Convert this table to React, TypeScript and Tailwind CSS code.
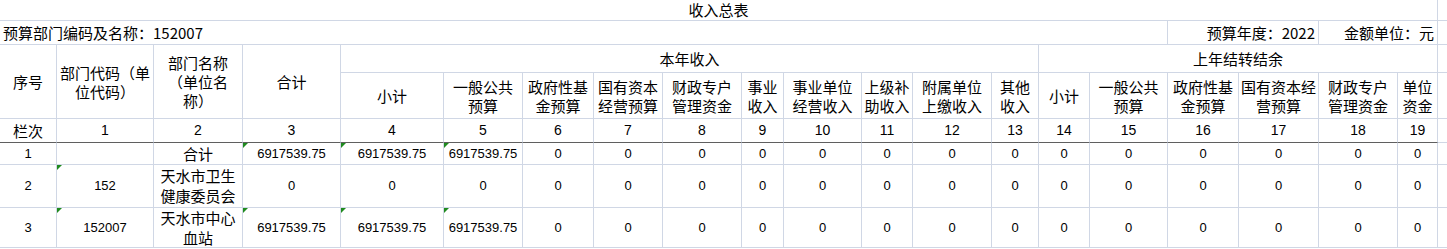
import React from "react";

const CJK = "font-['Noto_Sans_CJK_SC',sans-serif] text-[15px] leading-[19px] text-black";
const NUM = "font-['Liberation_Sans','Noto_Sans_CJK_SC',sans-serif] text-[13px] leading-[20px] text-black";
const IDX = "font-['Liberation_Sans','Noto_Sans_CJK_SC',sans-serif] text-[14px] leading-[19px] text-black";

type CellProps = {
  children?: React.ReactNode;
  className?: string;
  tri?: boolean;
  dark?: boolean;
};

function Cell({ children, className = "", tri, dark }: CellProps) {
  return (
    <div
      className={`relative flex items-center justify-center text-center whitespace-nowrap border-r border-b border-r-[#d0d7e5] ${
        dark ? "border-b-[#5f5f5f]" : "border-b-[#d0d7e5]"
      } ${className}`}
    >
      {tri && (
        <span className="absolute left-0 top-0 w-0 h-0 border-t-[5px] border-r-[5px] border-t-[#1f8a1f] border-r-transparent" />
      )}
      {children}
    </div>
  );
}

function Extra() {
  return <div className="border-b border-b-[#d0d7e5]" />;
}

const subHeads: React.ReactNode[] = [
  "小计",
  <>一般公共<br />预算</>,
  <>政府性基<br />金预算</>,
  <>国有资本<br />经营预算</>,
  <>财政专户<br />管理资金</>,
  <>事业<br />收入</>,
  <>事业单位<br />经营收入</>,
  <>上级补<br />助收入</>,
  <>附属单位<br />上缴收入</>,
  <>其他<br />收入</>,
  "小计",
  <>一般公共<br />预算</>,
  <>政府性基<br />金预算</>,
  <>国有资本经<br />营预算</>,
  <>财政专户<br />管理资金</>,
  <>单位<br />资金</>,
];

type Row = {
  no: string;
  code: string;
  codeTri: boolean;
  name: React.ReactNode;
  vals: string[];
  tris: boolean[];
};

const V = "6917539.75";
const zeros = (n: number) => Array.from({ length: n }, () => "0");

const rows: Row[] = [
  {
    no: "1",
    code: "",
    codeTri: false,
    name: "合计",
    vals: [V, V, V, ...zeros(14)],
    tris: [true, true, true],
  },
  {
    no: "2",
    code: "152",
    codeTri: true,
    name: <>天水市卫生<br />健康委员会</>,
    vals: ["0", "0", "0", ...zeros(14)],
    tris: [false, false, false],
  },
  {
    no: "3",
    code: "152007",
    codeTri: true,
    name: <>天水市中心<br />血站</>,
    vals: [V, V, V, ...zeros(14)],
    tris: [true, true, true],
  },
];

export default function App() {
  return (
    <div className="w-[1447px] h-[249px] bg-white overflow-hidden">
      <div className="grid grid-cols-[57px_97px_89px_98px_103px_79px_71px_69px_79px_42px_78px_51px_79px_47px_51px_78px_71px_80px_79px_40px_9px] grid-rows-[21px_24px_28px_46px_24px_22px_43px_40px]">
        {/* Title row */}
        <Cell className={`col-span-20 ${CJK} items-start`}>收入总表</Cell>
        <Extra />

        {/* Info row */}
        <Cell className={`col-span-16 justify-start pl-[3px] ${CJK}`}>预算部门编码及名称：152007</Cell>
        <Cell className={`col-span-2 justify-end pr-[3px] ${CJK}`}>预算年度：2022</Cell>
        <Cell className={`col-span-2 justify-end pr-[3px] ${CJK}`}>金额单位：元</Cell>
        <Extra />

        {/* Header rows */}
        <Cell className={`row-span-2 ${CJK}`}>序号</Cell>
        <Cell className={`row-span-2 ${CJK}`}>
          部门代码（单<br />位代码）
        </Cell>
        <Cell className={`row-span-2 ${CJK}`}>
          部门名称<br />（单位名<br />称）
        </Cell>
        <Cell className={`row-span-2 ${CJK}`}>合计</Cell>
        <Cell className={`col-span-10 ${CJK}`}>本年收入</Cell>
        <Cell className={`col-span-6 ${CJK}`}>上年结转结余</Cell>
        <Extra />

        {subHeads.map((h, i) => (
          <Cell key={i} className={CJK}>
            {h}
          </Cell>
        ))}
        <Extra />

        {/* 栏次 row */}
        <Cell dark className={CJK}>栏次</Cell>
        {Array.from({ length: 19 }, (_, i) => (
          <Cell key={i} dark className={IDX}>
            {i + 1}
          </Cell>
        ))}
        <Extra />

        {/* Data rows */}
        {rows.map((r) => (
          <React.Fragment key={r.no}>
            <Cell className={NUM}>{r.no}</Cell>
            <Cell tri={r.codeTri} className={NUM}>
              {r.code}
            </Cell>
            <Cell className={CJK + " leading-[20px]"}>{r.name}</Cell>
            {r.vals.map((v, i) => (
              <Cell key={i} tri={r.tris[i] ?? false} className={NUM}>
                {v}
              </Cell>
            ))}
            <Extra />
          </React.Fragment>
        ))}
      </div>
    </div>
  );
}
